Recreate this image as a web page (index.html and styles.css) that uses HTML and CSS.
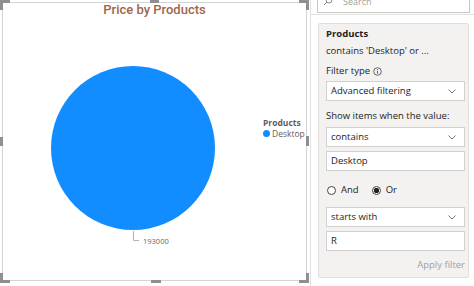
FILE: index.html
```html
<!DOCTYPE html>
<html lang="en">
<head>
    <meta charset="UTF-8">
    <title>Price by Products</title>
    <link rel="stylesheet" href="styles.css">
</head>
<body>
    <div class="canvas">
        <div class="visual">
            <span class="handle h-tl"></span>
            <span class="handle h-tr"></span>
            <span class="handle h-bl"></span>
            <span class="handle h-br"></span>
            <span class="handle h-t"></span>
            <span class="handle h-b"></span>
            <span class="handle h-l"></span>
            <span class="handle h-r"></span>

            <h1 class="chart-title">Price by Products</h1>
            <div class="chart-body">
                <svg class="pie" width="250" height="240" viewBox="0 0 250 240">
                    <circle cx="130" cy="129" r="82" fill="#118dff"/>
                    <polyline points="130.5,212 130.5,221.5 136,221.5" fill="none" stroke="#b3b3b3" stroke-width="1"/>
                    <text x="140" y="225" class="data-label">193000</text>
                </svg>
                <div class="legend">
                    <div class="legend-title">Products</div>
                    <div class="legend-item"><span class="legend-dot"></span>Desktop</div>
                </div>
            </div>
        </div>
    </div>

    <div class="pane">
        <div class="search-area">
            <div class="search-box">
                <svg width="10" height="10" viewBox="0 0 10 10"><circle cx="6" cy="4" r="3" fill="none" stroke="#888" stroke-width="1"/><line x1="3.8" y1="6.2" x2="1" y2="9" stroke="#888"/></svg>
                <span class="search-text">Search</span>
            </div>
        </div>

        <div class="filter-card">
            <div class="field-name">Products</div>
            <div class="field-summary">contains 'Desktop' or ...</div>

            <div class="label filter-type">Filter type
                <svg width="9" height="9" viewBox="0 0 9 9"><circle cx="4.5" cy="4.5" r="3.8" fill="none" stroke="#444" stroke-width="0.8"/><line x1="4.5" y1="3.8" x2="4.5" y2="6.6" stroke="#444" stroke-width="0.9"/><circle cx="4.5" cy="2.5" r="0.5" fill="#444"/></svg>
            </div>
            <div class="box select mt-4">Advanced filtering<svg class="chevron" width="8" height="5" viewBox="0 0 8 5"><polyline points="0.5,0.5 4,4 7.5,0.5" fill="none" stroke="#666" stroke-width="0.9"/></svg></div>

            <div class="label show-items">Show items when the value:</div>
            <div class="box select mt-5">contains<svg class="chevron" width="8" height="5" viewBox="0 0 8 5"><polyline points="0.5,0.5 4,4 7.5,0.5" fill="none" stroke="#666" stroke-width="0.9"/></svg></div>
            <div class="box mt-4">Desktop</div>

            <div class="radio-row">
                <span class="radio"></span><span class="radio-label">And</span>
                <span class="radio checked"></span><span class="radio-label">Or</span>
            </div>

            <div class="box select mt-11">starts with<svg class="chevron" width="8" height="5" viewBox="0 0 8 5"><polyline points="0.5,0.5 4,4 7.5,0.5" fill="none" stroke="#666" stroke-width="0.9"/></svg></div>
            <div class="box mt-4">R</div>

            <div class="apply">Apply filter</div>
        </div>
    </div>
</body>
</html>
```

FILE: styles.css
```css
body {
    margin: 0;
    width: 474px;
    height: 286px;
    display: flex;
    overflow: hidden;
    background: #ffffff;
    font-family: 'Open Sans', 'Noto Sans', sans-serif;
    color: #252423;
}
.canvas {
    width: 310px;
    height: 286px;
    padding: 2px 3px 0 2px;
    box-sizing: border-box;
    background: #ffffff;
}
.visual {
    position: relative;
    height: 277px;
    border: 1px solid #d4d4d4;
    display: flex;
    flex-direction: column;
}
.handle {
    position: absolute;
    background: #8f8f8f;
}
.h-tl, .h-tr, .h-bl, .h-br {
    width: 7px;
    height: 7px;
    background: transparent;
    border: 0 solid #8f8f8f;
}
.h-tl { left: -3px; top: -3px; border-top-width: 3px; border-left-width: 3px; }
.h-tr { right: -3px; top: -3px; border-top-width: 3px; border-right-width: 3px; }
.h-bl { left: -3px; bottom: -3px; border-bottom-width: 3px; border-left-width: 3px; }
.h-br { right: -3px; bottom: -3px; border-bottom-width: 3px; border-right-width: 3px; }
.h-t { top: -3px; left: 147px; width: 9px; height: 3px; }
.h-b { bottom: -3px; left: 148px; width: 10px; height: 3px; }
.h-l { left: -3px; top: 134px; width: 3px; height: 9px; }
.h-r { right: -3px; top: 133px; width: 3px; height: 10px; }

.chart-title {
    margin: 0;
    height: 16px;
    line-height: 14px;
    text-align: center;
    font-family: 'Roboto', sans-serif;
    font-weight: 500;
    font-size: 13px;
    color: #a0654a;
}
.chart-body {
    display: flex;
}
.pie {
    display: block;
    flex: none;
}
.data-label {
    font-family: 'Open Sans', sans-serif;
    font-size: 7.5px;
    fill: #666666;
}
.legend {
    margin-top: 98px;
    padding-left: 10px;
    font-size: 8.5px;
    line-height: 11px;
    color: #605e5c;
}
.legend-title {
    font-weight: 700;
    color: #605e5c;
}
.legend-item {
    display: flex;
    align-items: center;
    gap: 2px;
}
.legend-dot {
    width: 7px;
    height: 7px;
    border-radius: 50%;
    background: #118dff;
}

.pane {
    flex: 1;
    border-left: 1px solid #e1e1e1;
    background: #ffffff;
    display: flex;
    flex-direction: column;
}
.search-area {
    padding: 0 4px 1px 6px;
    border-bottom: 1px solid #e1e1e1;
}
.search-box {
    margin-top: -11px;
    height: 24px;
    box-sizing: border-box;
    border: 1px solid #c8c6c4;
    display: flex;
    align-items: center;
    gap: 10px;
    padding: 0 5px;
    font-size: 9px;
    color: #a19f9d;
}
.filter-card {
    margin: 8px 5px 0 7px;
    height: 255px;
    box-sizing: border-box;
    background: #f3f2f1;
    border: 1px solid #e1dfdd;
    border-radius: 2px;
    padding: 4px 3px 0 7px;
    font-size: 9.5px;
    line-height: 12px;
}
.field-name {
    font-weight: 700;
}
.field-summary {
    margin-top: 5px;
}
.label {
    display: flex;
    align-items: center;
    gap: 3px;
}
.filter-type { margin-top: 8px; }
.show-items { margin-top: 9px; }
.box {
    height: 20px;
    box-sizing: border-box;
    border: 1px solid #d2d0ce;
    background: #ffffff;
    padding: 0 4px;
    display: flex;
    align-items: center;
    justify-content: space-between;
}
.chevron {
    margin-right: 4px;
}
.mt-4 { margin-top: 4px; }
.mt-5 { margin-top: 5px; }
.mt-11 { margin-top: 11px; }
.radio-row {
    margin-top: 13px;
    height: 12px;
    display: flex;
    align-items: center;
}
.radio {
    width: 9px;
    height: 9px;
    box-sizing: border-box;
    border: 1px solid #444;
    border-radius: 50%;
    background: #ffffff;
    margin-left: 1px;
}
.radio.checked {
    margin-left: 13px;
    background: radial-gradient(circle, #252423 2.5px, #ffffff 3px);
}
.radio-label {
    margin-left: 5px;
}
.apply {
    margin-top: 8px;
    text-align: right;
    color: #a19f9d;
}
```
